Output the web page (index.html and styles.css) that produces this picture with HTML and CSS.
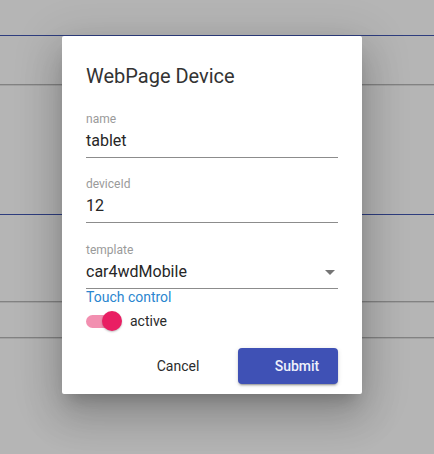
FILE: index.html
```html
<!DOCTYPE html>
<html>
<head>
<meta charset="utf-8">
<link rel="stylesheet" href="styles.css">
</head>
<body>
<div class="page">
  <div class="band band-a"></div>
  <div class="band band-b"></div>
  <div class="band band-c"></div>
  <div class="band band-d"></div>
  <div class="band band-e"></div>
</div>
<div class="dialog">
  <h2 class="title">WebPage Device</h2>
  <div class="field">
    <label class="label">name</label>
    <div class="input">tablet</div>
  </div>
  <div class="field">
    <label class="label">deviceId</label>
    <div class="input">12</div>
  </div>
  <div class="field field-select">
    <label class="label">template</label>
    <div class="input select">
      <span class="select-value">car4wdMobile</span>
      <svg class="arrow" width="24" height="24" viewBox="0 0 24 24"><path d="M7 10l5 5 5-5z" fill="#757575"/></svg>
    </div>
  </div>
  <div class="helper">Touch control</div>
  <div class="switch-row">
    <span class="switch"><span class="track"></span><span class="thumb"></span></span>
    <span class="switch-label">active</span>
  </div>
  <div class="actions">
    <button class="btn btn-cancel">Cancel</button>
    <button class="btn btn-submit">Submit</button>
  </div>
</div>
</body>
</html>
```

FILE: styles.css
```css
html, body {
  margin: 0;
  padding: 0;
}
body {
  background: #b5b5b5;
  width: 434px;
  height: 454px;
  overflow: hidden;
  font-family: Roboto, "Liberation Sans", sans-serif;
  position: relative;
}
.page {
  display: flex;
  flex-direction: column;
}
.band {
  flex: none;
}
.band-a {
  height: 35px;
  border-bottom: 1px solid #2e3d7e;
}
.band-b {
  height: 48px;
  border-bottom: 1px solid #828282;
  box-shadow: 0 1px 0 #a2a2a2;
}
.band-c {
  height: 129px;
  border-bottom: 1px solid #2e3d7e;
}
.band-d {
  height: 86px;
  border-bottom: 1px solid #828282;
  box-shadow: 0 1px 0 #a2a2a2;
}
.band-e {
  height: 35px;
  border-bottom: 1px solid #828282;
  box-shadow: 0 1px 0 #a2a2a2;
}
.dialog {
  position: absolute;
  left: 62px;
  top: 36px;
  width: 300px;
  height: 358px;
  box-sizing: border-box;
  background: #fff;
  border-radius: 2px;
  padding: 24px 24px 0 24px;
  box-shadow: 0 11px 15px -7px rgba(0,0,0,0.2), 0 24px 38px 3px rgba(0,0,0,0.14), 0 9px 46px 8px rgba(0,0,0,0.12);
  display: flex;
  flex-direction: column;
}
.title {
  margin: 0;
  font-size: 20px;
  line-height: 32px;
  font-weight: 400;
  color: #333;
}
.field {
  display: flex;
  flex-direction: column;
  margin-top: 18px;
  border-bottom: 1px solid #8c8c8c;
  padding-bottom: 4px;
}
.field:first-of-type {
  margin-top: 19px;
}
.field-select {
  margin-top: 19px;
}
.label {
  font-size: 12px;
  line-height: 16px;
  color: #9a9a9a;
  margin-bottom: 2px;
}
.input {
  font-size: 16px;
  line-height: 24px;
  color: #262626;
  height: 24px;
}
.select {
  display: flex;
  align-items: center;
}
.select-value {
  flex: 1;
}
.arrow {
  flex: none;
  margin-right: -4px;
}
.helper {
  font-size: 14px;
  line-height: 14px;
  color: #2a86cf;
  margin-top: 1px;
}
.switch-row {
  display: flex;
  align-items: center;
  height: 20px;
  margin-top: 7px;
}
.switch {
  position: relative;
  width: 36px;
  height: 20px;
  flex: none;
}
.track {
  position: absolute;
  left: 0;
  top: 4px;
  width: 32px;
  height: 13px;
  border-radius: 7px;
  background: #f28fb0;
}
.thumb {
  position: absolute;
  left: 16px;
  top: 0;
  width: 20px;
  height: 20px;
  border-radius: 50%;
  background: #e91e63;
  box-shadow: 0 1px 2px rgba(0,0,0,0.25);
}
.switch-label {
  font-size: 14px;
  line-height: 20px;
  color: #2b2b2b;
  margin-left: 8px;
}
.actions {
  display: flex;
  justify-content: flex-end;
  align-items: center;
  margin-top: 17px;
  gap: 18px;
}
.btn {
  font-family: Roboto, "Liberation Sans", sans-serif;
  font-size: 14px;
  line-height: 20px;
  height: 36px;
  border: none;
  border-radius: 4px;
  background: transparent;
  padding: 0;
  display: flex;
  align-items: center;
  justify-content: center;
  cursor: pointer;
}
.btn-cancel {
  width: 84px;
  color: #2b2b2b;
  font-weight: 400;
}
.btn-submit {
  width: 100px;
  padding-left: 18px;
  background: #3f51b5;
  color: #eef0fb;
  font-weight: 500;
  box-shadow: 0 3px 1px -2px rgba(0,0,0,0.2), 0 2px 2px 0 rgba(0,0,0,0.14), 0 1px 5px 0 rgba(0,0,0,0.12);
}
```
